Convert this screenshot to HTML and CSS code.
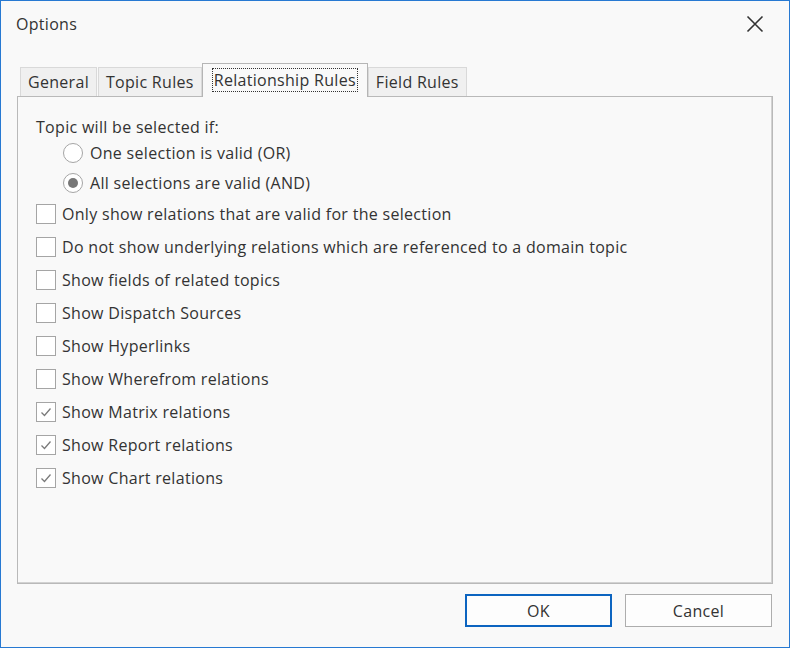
FILE: index.html
```html
<!DOCTYPE html>
<html>
<head>
	<title>Options</title>
	<link rel="stylesheet" href="styles.css">
</head>
<body>
	<div class="window">
		<div class="titlebar">
			<span class="title">Options</span>
			<svg class="close" width="20" height="20" viewBox="0 0 20 20">
				<path d="M2.5 2.5 L17.5 17.5 M17.5 2.5 L2.5 17.5" stroke="#333" stroke-width="1.6" fill="none"/>
			</svg>
		</div>
		<div class="content">
			<div class="tabs">
				<div class="tab">General</div>
				<div class="tab">Topic Rules</div>
				<div class="tab active"><span class="focus">Relationship Rules</span></div>
				<div class="tab">Field Rules</div>
			</div>
			<div class="panel">
				<div class="heading">Topic will be selected if:</div>
				<div class="radio-row">
					<span class="radio"></span>
					<span>One selection is valid (OR)</span>
				</div>
				<div class="radio-row">
					<span class="radio checked"></span>
					<span>All selections are valid (AND)</span>
				</div>
				<div class="check-row"><span class="box"></span><span>Only show relations that are valid for the selection</span></div>
				<div class="check-row"><span class="box"></span><span>Do not show underlying relations which are referenced to a domain topic</span></div>
				<div class="check-row"><span class="box"></span><span>Show fields of related topics</span></div>
				<div class="check-row"><span class="box"></span><span>Show Dispatch Sources</span></div>
				<div class="check-row"><span class="box"></span><span>Show Hyperlinks</span></div>
				<div class="check-row"><span class="box"></span><span>Show Wherefrom relations</span></div>
				<div class="check-row">
					<span class="box"><svg width="18" height="18" viewBox="0 0 18 18"><path d="M4.5 9.5 L7.5 12.5 L13.5 5.5" stroke="#7a7a7a" stroke-width="1.3" fill="none"/></svg></span>
					<span>Show Matrix relations</span>
				</div>
				<div class="check-row">
					<span class="box"><svg width="18" height="18" viewBox="0 0 18 18"><path d="M4.5 9.5 L7.5 12.5 L13.5 5.5" stroke="#7a7a7a" stroke-width="1.3" fill="none"/></svg></span>
					<span>Show Report relations</span>
				</div>
				<div class="check-row">
					<span class="box"><svg width="18" height="18" viewBox="0 0 18 18"><path d="M4.5 9.5 L7.5 12.5 L13.5 5.5" stroke="#7a7a7a" stroke-width="1.3" fill="none"/></svg></span>
					<span>Show Chart relations</span>
				</div>
			</div>
			<div class="buttons">
				<button class="btn default">OK</button>
				<button class="btn">Cancel</button>
			</div>
		</div>
	</div>
</body>
</html>
```

FILE: styles.css
```css
body {
	margin: 0;
	font-family: "Open Sans", "Noto Sans", sans-serif;
	font-size: 16px;
	letter-spacing: 0.3px;
	color: #333;
}

.window {
	width: 790px;
	height: 648px;
	box-sizing: border-box;
	border: 1px solid #2779d2;
	background: #f9f9f9;
	display: flex;
	flex-direction: column;
}

.titlebar {
	height: 46px;
	display: flex;
	align-items: center;
	justify-content: space-between;
	padding: 0 24px 0 15px;
}

.content {
	padding: 16px 16px 0 16px;
}

.tabs {
	display: flex;
	align-items: flex-end;
	height: 33px;
	padding-left: 3px;
}

.tab {
	height: 29px;
	line-height: 28px;
	padding: 0 7px;
	box-sizing: border-box;
	border: 1px solid #d9d9d9;
	border-bottom: none;
	background: #f0f0f0;
	margin-right: 1px;
}

.tab.active {
	height: 34px;
	line-height: 32px;
	padding: 0 10px 0 10px;
	background: #f9f9f9;
	border-color: #b5b5b5;
	margin: 0 0 -1px -1px;
	position: relative;
	z-index: 1;
}

.focus {
	outline: 1px dotted #333;
	outline-offset: 0;
	padding: 0 1px;
}

.panel {
	height: 488px;
	box-sizing: border-box;
	border: 1px solid #b9b9b9;
	box-shadow: inset -1px -1px 0 #d2d2d2;
	padding: 19px 0 0 18px;
}

.heading {
	height: 22px;
	line-height: 22px;
}

.radio-row {
	height: 30px;
	display: flex;
	align-items: center;
	padding-left: 27px;
	gap: 7px;
}

.radio-row + .check-row {
	margin-top: -1px;
}

.radio {
	width: 20px;
	height: 20px;
	box-sizing: border-box;
	border: 1px solid #a5a5a5;
	border-radius: 50%;
	background: #fff;
	display: flex;
	align-items: center;
	justify-content: center;
}

.radio.checked::after {
	content: "";
	width: 10px;
	height: 10px;
	border-radius: 50%;
	background: #777;
}

.check-row {
	height: 33px;
	display: flex;
	align-items: center;
	gap: 6px;
}

.box {
	width: 20px;
	height: 20px;
	box-sizing: border-box;
	border: 1px solid #a5a5a5;
	background: #fff;
	display: flex;
	align-items: center;
	justify-content: center;
}

.buttons {
	display: flex;
	justify-content: flex-end;
	gap: 13px;
	padding: 10px 1px 0 0;
}

.btn {
	width: 147px;
	height: 33px;
	font-family: inherit;
	font-size: 16px;
	letter-spacing: 0.3px;
	color: #333;
	background: #fdfdfd;
	border: 1px solid #adadad;
}

.btn.default {
	border: 2px solid #0c64c0;
}
```
